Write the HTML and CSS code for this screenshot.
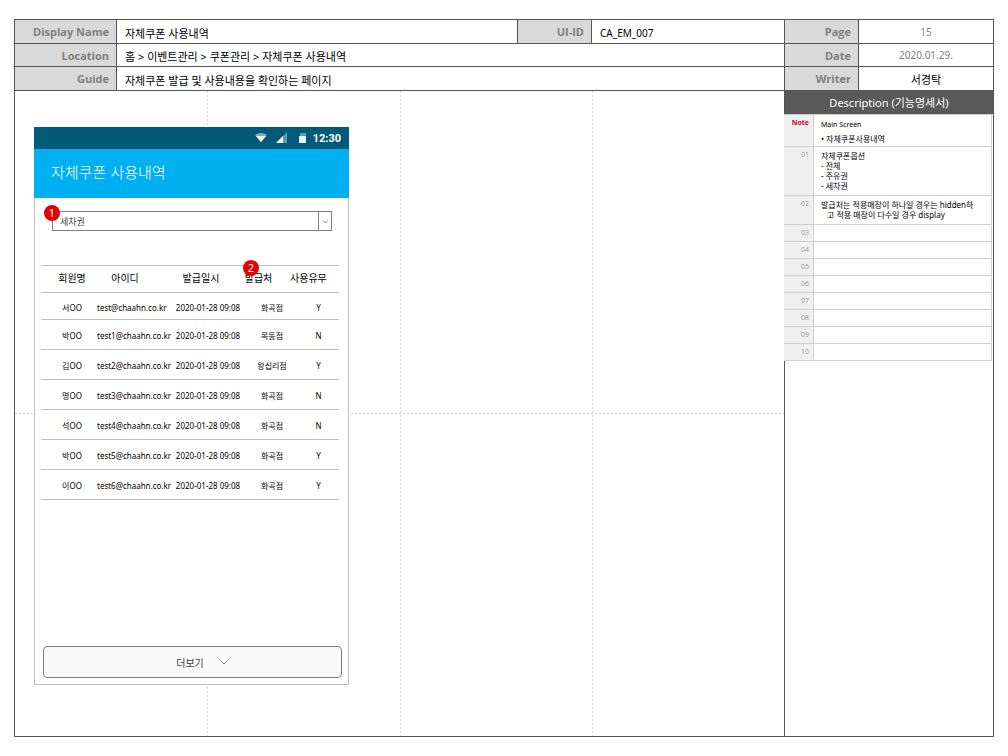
FILE: index.html
```html
<!DOCTYPE html>
<html lang="ko">
<head>
<meta charset="utf-8">
<title>자체쿠폰 사용내역</title>
<link rel="stylesheet" href="styles.css">
</head>
<body>
<div class="sheet">
  <main class="main">
    <dl class="meta">
      <div class="meta-row">
        <dt>Display Name</dt><dd>자체쿠폰 사용내역</dd>
        <dt class="uid-label">UI-ID</dt><dd class="uid">CA_EM_007</dd>
      </div>
      <div class="meta-row meta-row-mid"><dt>Location</dt><dd>홈 &gt; 이벤트관리 &gt; 쿠폰관리 &gt; 자체쿠폰 사용내역</dd></div>
      <div class="meta-row"><dt>Guide</dt><dd>자체쿠폰 발급 및 사용내용을 확인하는 페이지</dd></div>
    </dl>
    <section class="canvas">
      <div class="phone">
        <div class="status">
          <svg class="status-icons" width="54" height="12" viewBox="0 0 54 12" aria-hidden="true">
            <path d="M0 3Q6-1 12 3L6 10Z" fill="#7fb0c2"/>
            <path d="M1 4H11L6 10Z" fill="#fff"/>
            <path d="M21 11L32 0V11Z" fill="#5f9cb2"/>
            <path d="M21 11L28 4V11Z" fill="#fff"/>
            <path d="M45 1H51V4H45Z" fill="#5f9cb2"/>
            <path d="M44 4H51V11H44Z" fill="#e8f7fb"/>
          </svg>
          <span>12:30</span>
        </div>
        <h1 class="appbar">자체쿠폰 사용내역</h1>
        <div class="filter">
          <span class="badge">1</span>
          <select class="select" aria-label="쿠폰 종류">
            <option>세차권</option><option>전체</option><option>주유권</option>
          </select>
          <svg class="arrow" viewBox="0 0 14 18" aria-hidden="true"><path d="M.5 0V18M5 8.500L7.500 11L10 8.500" fill="none" stroke="#808080"/></svg>
        </div>
        <table class="list">
          <colgroup><col class="c-name"><col class="c-id"><col class="c-date"><col class="c-place"><col class="c-used"></colgroup>
          <thead><tr><th>회원명</th><th>아이디</th><th>발급일시</th><th><span class="badge">2</span>발급처</th><th>사용유무</th></tr></thead>
          <tbody>
            <tr><td>서OO</td><td>test@chaahn.co.kr</td><td>2020-01-28 09:08</td><td>화곡점</td><td>Y</td></tr>
            <tr><td>박OO</td><td>test1@chaahn.co.kr</td><td>2020-01-28 09:08</td><td>목동점</td><td>N</td></tr>
            <tr><td>김OO</td><td>test2@chaahn.co.kr</td><td>2020-01-28 09:08</td><td>왕십리점</td><td>Y</td></tr>
            <tr><td>명OO</td><td>test3@chaahn.co.kr</td><td>2020-01-28 09:08</td><td>화곡점</td><td>N</td></tr>
            <tr><td>석OO</td><td>test4@chaahn.co.kr</td><td>2020-01-28 09:08</td><td>화곡점</td><td>N</td></tr>
            <tr><td>박OO</td><td>test5@chaahn.co.kr</td><td>2020-01-28 09:08</td><td>화곡점</td><td>Y</td></tr>
            <tr><td>이OO</td><td>test6@chaahn.co.kr</td><td>2020-01-28 09:08</td><td>화곡점</td><td>Y</td></tr>
          </tbody>
        </table>
        <button class="more" type="button">더보기
          <svg width="10" height="6" viewBox="0 0 10 6" aria-hidden="true"><path d="M.5.5L5 5L9.500.5" fill="none" stroke="#808080"/></svg>
        </button>
      </div>
    </section>
  </main>
  <aside class="side">
    <dl class="meta">
      <div class="meta-row"><dt>Page</dt><dd class="soft">15</dd></div>
      <div class="meta-row meta-row-mid"><dt>Date</dt><dd class="soft">2020.01.29.</dd></div>
      <div class="meta-row"><dt>Writer</dt><dd>서경탁</dd></div>
    </dl>
    <h2 class="side-title">Description (기능명세서)</h2>
    <table class="notes">
      <colgroup><col class="c-no"><col></colgroup>
      <tbody>
        <tr class="note-row"><th class="note">Note</th><td>Main Screen<ul><li>자체쿠폰사용내역</li></ul></td></tr>
        <tr class="opt-row"><th>01</th><td>자체쿠폰옵션<br>- 전체<br>- 주유권<br>- 세차권</td></tr>
        <tr class="place-row"><th>02</th><td><p>발급처는 적용매장이 하나일 경우는 hidden하고 적용 매장이 다수일 경우 display</p></td></tr>
        <tr><th>03</th><td></td></tr>
        <tr><th>04</th><td></td></tr>
        <tr><th>05</th><td></td></tr>
        <tr><th>06</th><td></td></tr>
        <tr><th>07</th><td></td></tr>
        <tr><th>08</th><td></td></tr>
        <tr><th>09</th><td></td></tr>
        <tr><th>10</th><td></td></tr>
      </tbody>
    </table>
  </aside>
</div>
</body>
</html>
```

FILE: styles.css
```css
* { box-sizing: border-box; }
body {
  margin: 0;
  background: #fff;
  color: #000;
  font-family: "Noto Sans", "Noto Sans CJK KR", sans-serif;
  font-size: 11px;
}
dl, dd, ul, p, h1, h2 { margin: 0; padding: 0; }

.sheet {
  display: grid;
  grid-template-columns: minmax(0, 1fr) 209px;
  min-height: calc(100vh - 38px);
  margin: 19px 14px;
  border: 1px solid #555;
}
.main { display: flex; flex-direction: column; min-width: 0; }
.side { border-left: 1px solid #555; }

/* Header fields */
.meta-row { display: flex; height: 24px; border-bottom: 1px solid #555; }
.meta-row-mid { height: 23px; }
.meta dt {
  display: flex; align-items: center; justify-content: flex-end;
  width: 102px;
  padding-right: 7px;
  border-right: 1px solid #555;
  background: #d9d9d9;
  color: #808080;
  font-family: "Open Sans", sans-serif;
  font-size: 11px;
  font-weight: 700;
}
.meta dd { display: flex; flex: 1; align-items: center; padding: 2px 0 0 8px; white-space: nowrap; }
.meta .uid-label { width: 75px; border-left: 1px solid #555; }
.meta .uid { flex: 0 0 192px; padding-left: 8px; font-size: 10px; }
.side .meta dt { width: 74px; }
.side .meta dd { justify-content: center; padding: 0; }
.side .meta .soft { color: #808080; font-size: 10px; }
.meta-row-mid dd { padding-top: 1px; }

/* Working area with dashed guides */
.canvas {
  flex: 1;
  padding: 36px 19px;
  background-image:
    linear-gradient(#d4d4d4 2px, transparent 2px),
    linear-gradient(#d4d4d4 2px, transparent 2px),
    linear-gradient(#d4d4d4 2px, transparent 2px),
    linear-gradient(90deg, #d4d4d4 2px, transparent 2px);
  background-size: 1px 4px, 1px 4px, 1px 4px, 4px 1px;
  background-position: 25% 0, calc(50% + 1px) 0, calc(75% + 1px) 0, 0 50%;
  background-repeat: repeat-y, repeat-y, repeat-y, repeat-x;
}

/* Phone */
.phone {
  display: flex; flex-direction: column;
  width: 315px;
  min-height: 558px;
  border: 1px solid #bfbfbf;
  border-top: 0;
  background: #fff;
}
.status {
  display: flex; align-items: center; justify-content: flex-end;
  gap: 4px;
  height: 22px;
  margin: 0 -1px;
  padding-right: 8px;
  background: #005a78;
  color: #fff;
  font: 700 11px Roboto, sans-serif;
}
.appbar {
  display: flex; align-items: center;
  height: 49px;
  margin: 0 -1px;
  padding: 0 17px 4px;
  background: #00b0f0;
  color: #fff;
  font-family: "Noto Sans CJK KR", sans-serif;
  font-size: 15px;
  font-weight: 300;
}
.filter { position: relative; margin: 13px 16px 0 17px; }
.select {
  display: block;
  width: 100%;
  height: 20px;
  padding: 0 20px 0 7px;
  border: 1px solid #808080;
  border-radius: 0;
  appearance: none;
  background: #fff;
  color: #404040;
  font: 9px "Noto Sans CJK KR", sans-serif;
}
.arrow { position: absolute; top: 1px; right: 0; width: 14px; height: 18px; pointer-events: none; }
.badge {
  position: absolute;
  display: flex; align-items: center; justify-content: center;
  width: 16px;
  height: 16px;
  border-radius: 50%;
  background: #e60000;
  color: #fff;
  font-size: 11px;
  font-weight: 400;
  line-height: 16px;
}
.filter .badge { top: -6px; left: -8px; }
.list .badge { top: -6px; left: 0; }

/* Coupon list */
.list {
  width: calc(100% - 15px);
  margin: 34px 9px 0 6px;
  border-collapse: separate;
  border-spacing: 0;
  table-layout: fixed;
  border-top: 1px solid #bfbfbf;
}
.list th, .list td {
  position: relative;
  height: 30px;
  padding: 3px 0 0;
  border-bottom: 1px solid #bfbfbf;
  font-size: 8px;
  line-height: 12px;
  text-align: center;
  white-space: nowrap;
}
.list th { height: 27px; padding: 0 0 3px; font-size: 10px; font-weight: 400; }
.list tbody tr:first-child td { height: 27px; }
.c-name { width: 54px; }
.c-id { width: 78px; }
.c-date { width: 70px; }
.c-place { width: 47px; }
.list th:nth-child(1), .list td:nth-child(1) { padding-left: 8px; }
.list th:nth-child(2) { padding-right: 18px; }
.list td:nth-child(2) { padding-left: 2px; text-align: left; }
.list th:nth-child(3) { padding-right: 14px; }
.list th:nth-child(4) { padding-right: 16px; }
.list td:nth-child(4) { padding-left: 11px; }
.list th:nth-child(5) { padding-right: 20px; }
.list td:nth-child(5) { padding-left: 8px; }

.more {
  display: flex; align-items: center; justify-content: center;
  gap: 15px;
  height: 32px;
  margin: auto 6px 6px 8px;
  padding: 0 0 0 20px;
  border: 1px solid #7f7f7f;
  border-radius: 4px;
  background: #fafafa;
  color: #404040;
  font: 10px "Noto Sans CJK KR", sans-serif;
}

/* Description panel */
.side-title {
  display: flex; align-items: center; justify-content: center;
  height: 23px;
  padding-bottom: 1px;
  background: #595959;
  color: #fff;
  font-size: 11px;
  font-weight: 400;
}
.notes {
  width: 100%;
  margin-left: -1px;
  border-spacing: 0;
  table-layout: fixed;
  border-top: 1px solid #ccc;
}
.c-no { width: 30px; }
.notes th, .notes td {
  height: 17px;
  padding: 4px 4px 0 7px;
  border-right: 1px solid #d0d0d0;
  border-bottom: 1px solid #d0d0d0;
  font-size: 8px;
  line-height: 10px;
  text-align: left;
  vertical-align: top;
}
.notes th { padding: 3px 4px 0 0; background: #f0f0f0; color: #a0a0a0; font-size: 7px; font-weight: 400; text-align: right; }
.notes .note { color: #c00020; font-weight: 700; }
.notes .note-row td { height: 32px; padding-top: 5px; font-size: 7px; }
.notes .opt-row td { height: 49px; }
.notes .place-row td { height: 29px; padding-right: 12px; }
.notes ul { padding-top: 4px; font-size: 8px; list-style: none; }
.notes li::before { content: "• "; }
.notes p { padding-left: 6px; text-indent: -6px; word-break: break-all; }
```
